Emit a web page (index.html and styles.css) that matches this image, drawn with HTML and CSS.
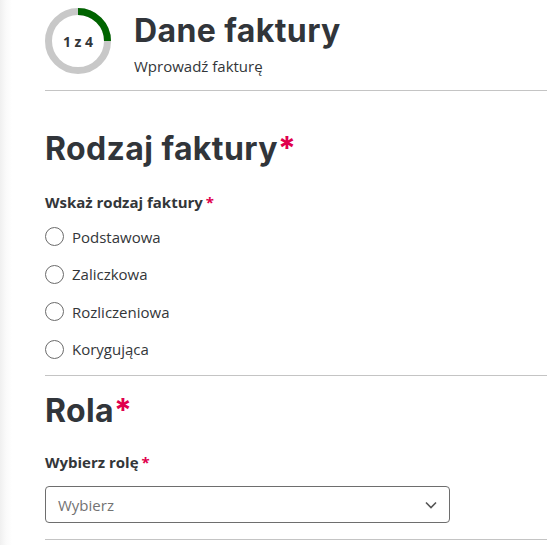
FILE: index.html
```html
<!DOCTYPE html>
<html lang="pl">
<head>
<meta charset="utf-8">
<title>Dane faktury</title>
<link rel="stylesheet" href="styles.css">
</head>
<body>
<main class="page">
  <header class="step-header">
    <div class="progress">
      <svg class="progress-ring" width="66" height="66" viewBox="0 0 66 66">
        <circle cx="33" cy="33" r="29.5" fill="none" stroke="#c8c8c8" stroke-width="7"/>
        <path d="M33 3.5 A29.5 29.5 0 0 1 62.5 33" fill="none" stroke="#006400" stroke-width="7"/>
      </svg>
      <span class="progress-text">1 z 4</span>
    </div>
    <div class="step-titles">
      <h1 class="step-title">Dane faktury</h1>
      <p class="step-sub">Wprowadź fakturę</p>
    </div>
  </header>

  <section class="section section-type">
    <h2 class="section-title">Rodzaj faktury<span class="req">*</span></h2>
    <p class="field-label">Wskaż rodzaj faktury<span class="req req-label">*</span></p>
    <ul class="radios">
      <li class="radio"><span class="radio-dot"></span>Podstawowa</li>
      <li class="radio"><span class="radio-dot"></span>Zaliczkowa</li>
      <li class="radio"><span class="radio-dot"></span>Rozliczeniowa</li>
      <li class="radio"><span class="radio-dot"></span>Korygująca</li>
    </ul>
  </section>

  <section class="section section-role">
    <h2 class="section-title">Rola<span class="req">*</span></h2>
    <p class="field-label label-role">Wybierz rolę<span class="req req-label">*</span></p>
    <div class="select">
      <span class="select-placeholder">Wybierz</span>
      <svg class="chevron" width="12" height="8" viewBox="0 0 12 8">
        <polyline points="1,1.5 6,6.5 11,1.5" fill="none" stroke="#555" stroke-width="1.6"/>
      </svg>
    </div>
  </section>
</main>
</body>
</html>
```

FILE: styles.css
```css
html, body {
  margin: 0;
  padding: 0;
}
body {
  background: linear-gradient(to right, #f0f0f0 0, #fafafa 6px, #ffffff 12px);
  font-family: "Open Sans", "Liberation Sans", sans-serif;
  color: #333639;
  min-height: 545px;
}
.page {
  padding-left: 45px;
}
.step-header {
  display: flex;
  align-items: flex-start;
  gap: 23px;
  padding-top: 8px;
  height: 82px;
  border-bottom: 1px solid #c4c4c4;
}
.progress {
  position: relative;
  width: 66px;
  height: 66px;
}
.progress-ring {
  display: block;
}
.progress-text {
  position: absolute;
  inset: 0;
  display: flex;
  align-items: center;
  justify-content: center;
  font-weight: 700;
  font-size: 14px;
  color: #333639;
}
.step-titles {
  padding-top: 3px;
}
.step-title {
  margin: 0;
  font-family: Inter, "Noto Sans", sans-serif;
  font-weight: 700;
  font-size: 32px;
  line-height: 40px;
  letter-spacing: 0.4px;
  color: #31353a;
}
.step-sub {
  margin: 5px 0 0;
  font-size: 15px;
  line-height: 20px;
}
.section {
  border-bottom: 1px solid #c4c4c4;
}
.section-type {
  padding-top: 38px;
}
.section-title {
  margin: 0;
  font-family: Inter, "Noto Sans", sans-serif;
  font-weight: 700;
  font-size: 32px;
  line-height: 40px;
  letter-spacing: 0.4px;
  color: #31353a;
}
.req {
  color: #e0004d;
}
.req-label {
  margin-left: 3px;
}
.field-label {
  margin: 23px 0 0;
  font-weight: 700;
  font-size: 15px;
  line-height: 20px;
}
.radios {
  list-style: none;
  margin: 6px 0 0;
  padding: 0 0 7px;
}
.radio {
  display: flex;
  align-items: center;
  gap: 8px;
  height: 37.5px;
  font-size: 15px;
}
.radio-dot {
  box-sizing: border-box;
  width: 19px;
  height: 19px;
  border: 1px solid #6b6b6b;
  border-radius: 50%;
}
.section-role {
  padding-top: 15px;
  padding-bottom: 16px;
}
.label-role {
  margin-top: 21px;
}
.select {
  box-sizing: border-box;
  margin-top: 14px;
  width: 405px;
  height: 37px;
  border: 1px solid #6e6e6e;
  border-radius: 4px;
  display: flex;
  align-items: center;
  justify-content: space-between;
  padding: 0 12px 0 12px;
}
.select-placeholder {
  font-size: 15px;
  color: #737373;
}
```
